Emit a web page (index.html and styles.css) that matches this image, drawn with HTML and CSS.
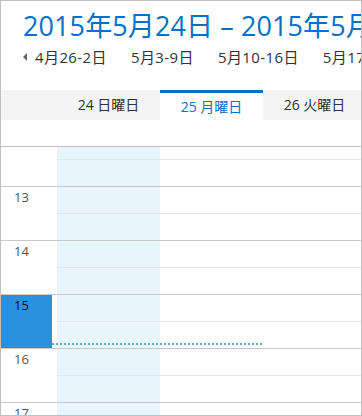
FILE: index.html
```html
<!DOCTYPE html>
<html lang="ja">
<head>
    <meta charset="UTF-8">
    <meta name="viewport" content="width=device-width, initial-scale=1.0">
    <title>カレンダー 週表示</title>
    <link rel="stylesheet" href="styles.css">
</head>
<body>
    <div class="calendar">
        <div class="cal-top">
            <h1 class="range-title">2015年5月24日 – 2015年5月30日</h1>
            <div class="week-nav">
                <span class="nav-arrow"></span>
                <a href="#">4月26-2日</a>
                <a href="#">5月3-9日</a>
                <a href="#">5月10-16日</a>
                <a href="#">5月17-23日</a>
            </div>
        </div>

        <div class="day-head">
            <div class="day-name gutter"></div>
            <div class="day-name">24 日曜日</div>
            <div class="day-name selected">25 月曜日</div>
            <div class="day-name">26 火曜日</div>
        </div>
        <div class="all-day"></div>

        <div class="day-body">
            <div class="hours">
                <div class="hour">
                    <div class="time"><span></span></div>
                    <div class="cell today"><div class="slot"></div><div class="slot"></div></div>
                    <div class="cell"><div class="slot"></div><div class="slot"></div></div>
                    <div class="cell"><div class="slot"></div><div class="slot"></div></div>
                </div>
                <div class="hour">
                    <div class="time"><span>13</span></div>
                    <div class="cell today"><div class="slot"></div><div class="slot"></div></div>
                    <div class="cell"><div class="slot"></div><div class="slot"></div></div>
                    <div class="cell"><div class="slot"></div><div class="slot"></div></div>
                </div>
                <div class="hour">
                    <div class="time"><span>14</span></div>
                    <div class="cell today"><div class="slot"></div><div class="slot"></div></div>
                    <div class="cell"><div class="slot"></div><div class="slot"></div></div>
                    <div class="cell"><div class="slot"></div><div class="slot"></div></div>
                </div>
                <div class="hour">
                    <div class="time now"><span>15</span></div>
                    <div class="cell today"><div class="slot"></div><div class="slot"></div></div>
                    <div class="cell"><div class="slot"></div><div class="slot"></div></div>
                    <div class="cell"><div class="slot"></div><div class="slot"></div></div>
                    <div class="now-line"></div>
                </div>
                <div class="hour">
                    <div class="time"><span>16</span></div>
                    <div class="cell today"><div class="slot"></div><div class="slot"></div></div>
                    <div class="cell"><div class="slot"></div><div class="slot"></div></div>
                    <div class="cell"><div class="slot"></div><div class="slot"></div></div>
                </div>
                <div class="hour">
                    <div class="time"><span>17</span></div>
                    <div class="cell today"><div class="slot"></div><div class="slot"></div></div>
                    <div class="cell"><div class="slot"></div><div class="slot"></div></div>
                    <div class="cell"><div class="slot"></div><div class="slot"></div></div>
                </div>
            </div>
        </div>
    </div>
</body>
</html>
```

FILE: styles.css
```css
body {
    margin: 0;
    font-family: "Open Sans", "Noto Sans CJK JP", sans-serif;
    color: #333;
}
.calendar {
    width: 362px;
    height: 416px;
    box-sizing: border-box;
    border: 1px solid #c0c0c0;
    display: flex;
    flex-direction: column;
    overflow: hidden;
}
.cal-top {
    height: 89px;
    flex: none;
    padding-left: 22px;
    box-sizing: border-box;
}
.range-title {
    margin: 0;
    padding-top: 7px;
    font-size: 27px;
    font-weight: normal;
    letter-spacing: 0.1px;
    line-height: 36px;
    color: #0072c6;
    white-space: nowrap;
}
.week-nav {
    margin-top: 3px;
    display: flex;
    align-items: center;
    gap: 24px;
    font-size: 15px;
    letter-spacing: 0.4px;
    line-height: 20px;
    white-space: nowrap;
}
.week-nav a {
    color: #333;
    text-decoration: none;
}
.nav-arrow {
    width: 0;
    height: 0;
    border-top: 4px solid transparent;
    border-bottom: 4px solid transparent;
    border-right: 4px solid #666;
    margin-right: -16px;
}
.day-head,
.hour {
    display: grid;
    grid-template-columns: 56px 103px 103px 103px;
}
.day-head {
    flex: none;
    height: 30px;
    background: #f4f4f4;
}
.day-name {
    text-align: center;
    font-size: 14px;
    line-height: 30px;
    white-space: nowrap;
}
.day-name.selected {
    background: #fff;
    color: #0072c6;
    border-top: 3px solid #0072c6;
    line-height: 27px;
}
.all-day {
    flex: none;
    height: 26px;
}
.day-body {
    flex: 1;
    border-top: 1px solid #c0c0c0;
    overflow: hidden;
}
.hours {
    margin-top: -15px;
}
.hour {
    position: relative;
    height: 54px;
    box-sizing: border-box;
    border-top: 1px solid #c8c8c8;
}
.time {
    font-size: 13px;
    line-height: 16px;
    color: #555;
}
.time span {
    display: block;
    padding: 2px 0 0 13px;
}
.time.now span {
    width: 51px;
    height: 53px;
    box-sizing: border-box;
    background: #2b91de;
    color: #111;
}
.cell.today {
    background: #e8f5fc;
}
.slot {
    height: 26px;
}
.slot:first-child {
    height: 27px;
    border-bottom: 1px solid #e6e6e6;
    box-sizing: border-box;
}
.now-line {
    position: absolute;
    left: 51px;
    top: 48px;
    width: 211px;
    height: 2px;
    background: repeating-linear-gradient(90deg, #5fa9e3 0 2px, transparent 2px 4px);
}
```
